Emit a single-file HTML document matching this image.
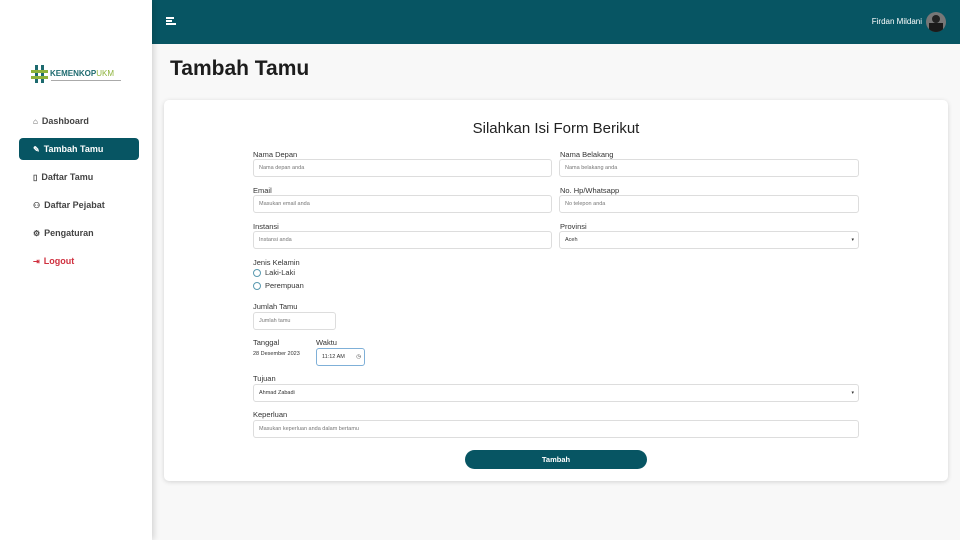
<!DOCTYPE html>
<html><head><style>
*{box-sizing:border-box;margin:0;padding:0}
body{width:960px;height:540px;background:#f8f8f8;font-family:"Liberation Sans",sans-serif;position:relative;overflow:hidden;color:#222}
.side{position:absolute;left:0;top:0;width:152px;height:540px;background:#fff;box-shadow:2px 0 6px rgba(0,0,0,.15);z-index:2}
.top{position:absolute;left:152px;top:0;right:0;height:44px;background:#075563}
.nav{position:absolute;left:19px;width:120px;height:22px;font-size:9px;font-weight:bold;color:#444;padding-left:14px;line-height:22px}
.nav.act{background:#075563;color:#fff;border-radius:4px}
.nav i{font-style:normal;margin-right:4px;font-size:8px}
h1{position:absolute;left:170px;top:57px;font-size:21px;font-weight:bold;color:#1d1d1d}
.card{position:absolute;left:164px;top:100px;width:784px;height:381px;background:#fff;border-radius:5px;box-shadow:0 1px 5px rgba(0,0,0,.15)}
.t{position:absolute;left:0;width:784px;top:20px;text-align:center;font-size:15px;color:#222}
.l{position:absolute;font-size:7.5px;color:#333}
.in{position:absolute;height:18px;border:1px solid #ddd;border-radius:3px;font-size:5.5px;color:#777;padding-left:5px;line-height:16px}
.r{position:absolute;width:8px;height:8px;border:1px solid #5a9ab0;border-radius:50%}
.btn{position:absolute;left:301px;top:350px;width:182px;height:19px;background:#075563;border-radius:10px;color:#fff;font-size:7.5px;font-weight:bold;text-align:center;line-height:19px}
</style></head><body>
<div class="side">
<div style="position:absolute;left:31px;top:65px;width:17px;height:18px;">
<div style="position:absolute;left:4px;top:0;width:3px;height:18px;background:#1d6a6f"></div>
<div style="position:absolute;left:10px;top:0;width:3px;height:18px;background:#1d6a6f"></div>
<div style="position:absolute;left:0;top:5px;width:17px;height:3px;background:#8db33a"></div>
<div style="position:absolute;left:0;top:11px;width:17px;height:3px;background:#8db33a"></div>
</div>
<div style="position:absolute;left:50px;top:69px;font-size:8px;color:#1d6a6f;font-weight:bold">KEMENKOP<span style="color:#8db33a;font-weight:normal">UKM</span></div>
<div style="position:absolute;left:51px;top:80px;width:70px;height:1px;background:#aaa"></div>
<div class="nav" style="top:110px"><i>⌂</i>Dashboard</div>
<div class="nav act" style="top:138px"><i>✎</i>Tambah Tamu</div>
<div class="nav" style="top:166px"><i>▯</i>Daftar Tamu</div>
<div class="nav" style="top:194px"><i>⚇</i>Daftar Pejabat</div>
<div class="nav" style="top:222px"><i>⚙</i>Pengaturan</div>
<div class="nav" style="top:250px;color:#d0303f"><i>⇥</i>Logout</div>
</div>
<div class="top">
<div style="position:absolute;left:14px;top:17px;width:10px"><div style="height:2px;background:#fff;width:8px;margin-bottom:1px"></div><div style="height:2px;background:#fff;width:6px;margin-bottom:1px"></div><div style="height:2px;background:#fff;width:10px"></div></div>
<div style="position:absolute;right:38px;top:17px;font-size:8px;color:#fff">Firdan Mildani</div>
<div style="position:absolute;right:14px;top:12px;width:20px;height:20px;border-radius:50%;background:#777;overflow:hidden"><div style="position:absolute;left:6px;top:3px;width:8px;height:8px;border-radius:50%;background:#222"></div><div style="position:absolute;left:3px;top:11px;width:14px;height:10px;background:#1a1a1a"></div></div>
</div>
<h1>Tambah Tamu</h1>
<div class="card">
<div class="t">Silahkan Isi Form Berikut</div>
<div class="l" style="left:89px;top:50px">Nama Depan</div><div class="in" style="left:89px;top:59px;width:299px">Nama depan anda</div>
<div class="l" style="left:396px;top:50px">Nama Belakang</div><div class="in" style="left:395px;top:59px;width:300px">Nama belakang anda</div>
<div class="l" style="left:89px;top:86px">Email</div><div class="in" style="left:89px;top:95px;width:299px">Masukan email anda</div>
<div class="l" style="left:396px;top:86px">No. Hp/Whatsapp</div><div class="in" style="left:395px;top:95px;width:300px">No telepon anda</div>
<div class="l" style="left:89px;top:122px">Instansi</div><div class="in" style="left:89px;top:131px;width:299px">Instansi anda</div>
<div class="l" style="left:396px;top:122px">Provinsi</div><div class="in" style="left:395px;top:131px;width:300px;color:#333">Aceh<span style="position:absolute;right:4px;font-size:5px">▾</span></div>
<div class="l" style="left:89px;top:158px">Jenis Kelamin</div>
<div class="r" style="left:89px;top:169px"></div><div class="l" style="left:101px;top:168px">Laki-Laki</div>
<div class="r" style="left:89px;top:182px"></div><div class="l" style="left:101px;top:181px">Perempuan</div>
<div class="l" style="left:89px;top:202px">Jumlah Tamu</div><div class="in" style="left:89px;top:212px;width:83px">Jumlah tamu</div>
<div class="l" style="left:89px;top:238px">Tanggal</div><div class="l" style="left:89px;top:251px;font-size:5.5px">28 Desember 2023</div>
<div class="l" style="left:152px;top:238px">Waktu</div><div class="in" style="left:152px;top:248px;width:49px;border-color:#7fb0d8;color:#333">11:12 AM<span style="position:absolute;right:3px">◷</span></div>
<div class="l" style="left:89px;top:274px">Tujuan</div><div class="in" style="left:89px;top:284px;width:606px;color:#333">Ahmad Zabadi<span style="position:absolute;right:4px;font-size:5px">▾</span></div>
<div class="l" style="left:89px;top:310px">Keperluan</div><div class="in" style="left:89px;top:320px;width:606px">Masukan keperluan anda dalam bertamu</div>
<div class="btn">Tambah</div>
</div>
</body></html>
